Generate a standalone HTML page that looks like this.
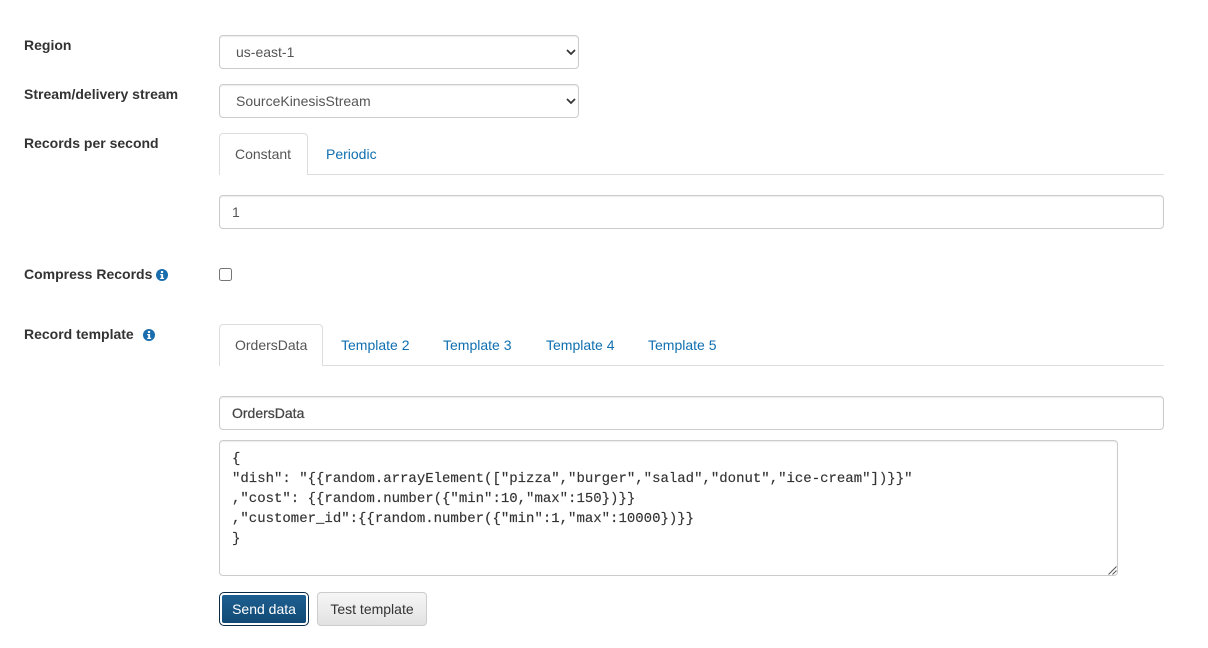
<!DOCTYPE html>
<html>
<head>
<meta charset="utf-8">
<style>
html,body{margin:0;padding:0;background:#fff;}
body{width:1208px;height:648px;position:relative;overflow:hidden;font-family:"Liberation Sans",Arial,sans-serif;font-size:14px;line-height:20px;color:#333;}
.a{position:absolute;white-space:nowrap;}
.l{left:24px;font-weight:700;color:#333;}
.box{position:absolute;box-sizing:border-box;background:#fff;border:1px solid #ccc;border-radius:4px;box-shadow:inset 0 1px 1px rgba(0,0,0,.075);color:#555;padding:0 12px;line-height:32px;white-space:nowrap;}
.sel{left:219px;width:360px;height:34px;padding-left:16px;}
.sel svg{position:absolute;left:346px;top:10px;}
.line{position:absolute;left:219px;width:945px;height:1px;background:#ddd;}
.tab{position:absolute;box-sizing:border-box;background:#fff;border:1px solid #ddd;border-bottom:0;border-radius:4px 4px 0 0;color:#555;padding:10px 15px 0;white-space:nowrap;}
.lnk{position:absolute;color:#0f6fb0;white-space:nowrap;}
.i{position:absolute;width:12px;height:12px;}
pre{position:absolute;margin:0;font-family:"Liberation Mono","Courier New",monospace;font-size:14px;line-height:20px;color:#333;}
</style>
</head>
<body>
<div class="a l" style="top:35px">Region</div>
<div class="box sel" style="top:35px">us-east-1<svg width="10" height="12" viewBox="0 0 10 12"><path d="M1 4 5 8 9 4" fill="none" stroke="#333" stroke-width="1.700"/></svg></div>

<div class="a l" style="top:84px">Stream/delivery stream</div>
<div class="box sel" style="top:84px">SourceKinesisStream<svg width="10" height="12" viewBox="0 0 10 12"><path d="M1 4 5 8 9 4" fill="none" stroke="#333" stroke-width="1.700"/></svg></div>

<div class="a l" style="top:133px">Records per second</div>
<div class="line" style="top:174px"></div>
<div class="tab" style="left:219px;top:133px;width:89px;height:42px">Constant</div>
<div class="lnk" style="left:326px;top:144px">Periodic</div>
<div class="box" style="left:219px;top:195px;width:945px;height:34px">1</div>

<div class="a l" style="top:264px">Compress Records</div>
<svg class="i" style="left:156px;top:269px" viewBox="0 0 12 12"><circle cx="6" cy="6" r="6" fill="#1a6ead"/><rect x="4.900" y="2" width="2.200" height="2" fill="#fff"/><path d="M4.200 5h2.900v3.800h1v1.200H4.200V8.800h1V6.200h-1z" fill="#fff"/></svg>
<div class="box" style="left:219px;top:268px;width:13px;height:13px;border:1px solid #767676;border-radius:2.500px;box-shadow:none;padding:0"></div>

<div class="a l" style="top:324px">Record template</div>
<svg class="i" style="left:143px;top:329px" viewBox="0 0 12 12"><circle cx="6" cy="6" r="6" fill="#1a6ead"/><rect x="4.900" y="2" width="2.200" height="2" fill="#fff"/><path d="M4.200 5h2.900v3.800h1v1.200H4.200V8.800h1V6.200h-1z" fill="#fff"/></svg>
<div class="line" style="top:365px"></div>
<div class="tab" style="left:219px;top:324px;width:104px;height:42px">OrdersData</div>
<div class="lnk" style="left:341px;top:335px">Template 2</div>
<div class="lnk" style="left:443px;top:335px">Template 3</div>
<div class="lnk" style="left:546px;top:335px">Template 4</div>
<div class="lnk" style="left:648px;top:335px">Template 5</div>

<div class="box" style="left:219px;top:396px;width:945px;height:34px;color:#444;-webkit-text-stroke:.25px #444">OrdersData</div>
<div class="box" style="left:219px;top:440px;width:899px;height:136px"></div>
<pre style="left:232px;top:449px;-webkit-text-stroke:.15px #333">{
"dish": "{{random.arrayElement(["pizza","burger","salad","donut","ice-cream"])}}"
,"cost": {{random.number({"min":10,"max":150})}}
,"customer_id":{{random.number({"min":1,"max":10000})}}
}</pre>
<svg style="position:absolute;left:1108px;top:566px" width="9" height="9" viewBox="0 0 9 9"><path d="M0.500 8.500 8.500 0.500M4.500 8.500 8.500 4.500" stroke="#555" stroke-width="1" fill="none"/></svg>

<div class="a" style="left:219px;top:592px;width:90px;height:34px;box-sizing:border-box;border:1px solid #0c2a44;border-radius:5px;background:#fff;padding:2px">
<div style="height:28px;border-radius:2px;background:linear-gradient(#1d5f91,#124a75);color:#fff;text-align:center;line-height:28px">Send data</div>
</div>
<div class="a" style="left:317px;top:592px;width:110px;height:34px;box-sizing:border-box;border:1px solid #ccc;border-radius:4px;background:linear-gradient(#f6f6f6,#e2e2e2);color:#333;text-align:center;line-height:32px">Test template</div>
</body>
</html>
